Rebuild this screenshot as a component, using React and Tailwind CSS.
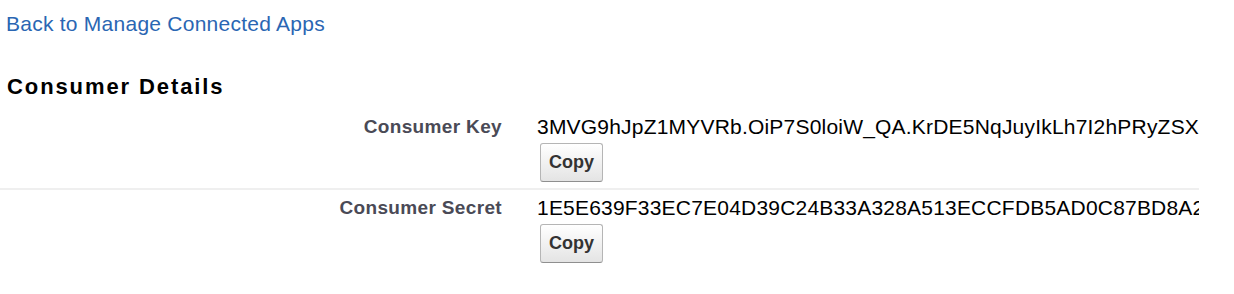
export default function App() {
  const rows = [
    { label: "Consumer Key", value: "3MVG9hJpZ1MYVRb.OiP7S0loiW_QA.KrDE5NqJuyIkLh7I2hPRyZSX" },
    { label: "Consumer Secret", value: "1E5E639F33EC7E04D39C24B33A328A513ECCFDB5AD0C87BD8A2" },
  ];

  return (
    <div className="w-[1234px] h-[294px] bg-white font-['Liberation_Sans',Arial,sans-serif] overflow-hidden">
      {/* back link */}
      <div className="pt-[12px] pl-[6px]">
        <a href="#" className="text-[21px] leading-[24px] text-[#2a66b3] tracking-[0.25px]">
          Back to Manage Connected Apps
        </a>
      </div>

      <h3 className="mt-[36px] pl-[7px] text-[22px] leading-[26px] font-bold text-black tracking-[1.9px]">
        Consumer Details
      </h3>

      <div className="mt-[9px] w-[1199px] overflow-hidden">
        {rows.map((row, i) => (
          <div
            key={row.label}
            className={
              i === 0
                ? "flex items-start pt-[6px] pb-[6px] border-b-2 border-[#efefef]"
                : "flex items-start pt-[6px] pb-[6px]"
            }
          >
            <div className="w-[520px] shrink-0 pr-[18px] text-right text-[19px] leading-[24px] font-bold text-[#4a4a56] tracking-[0.35px]">
              {row.label}
            </div>
            <div className="pl-[17px] min-w-0 flex-1 overflow-hidden">
              <div className="text-[21px] leading-[24px] text-black whitespace-nowrap tracking-[0.2px]">
                {row.value}
              </div>
              <button className="mt-[4px] ml-[3px] h-[39px] px-[8px] rounded-[3px] border border-[#b5b5b5] border-b-[#8f8f8f] bg-gradient-to-b from-white to-[#e4e4e4] text-[18px] leading-[21px] font-bold text-[#333]">
                Copy
              </button>
            </div>
          </div>
        ))}
      </div>
    </div>
  );
}
